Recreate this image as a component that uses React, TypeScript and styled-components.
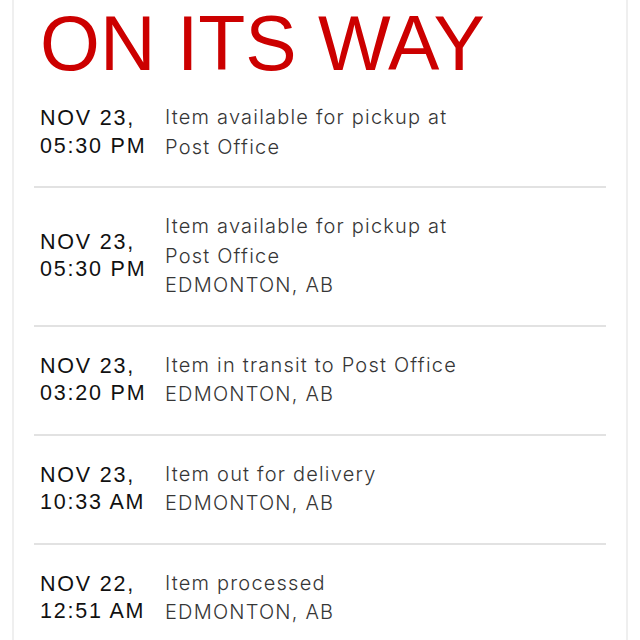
import React from 'react'
import styled, { createGlobalStyle } from "styled-components";

const GlobalStyle = createGlobalStyle`
    html, body {
        margin: 0;
        padding: 0;
        background: #ffffff;
    }
    body {
        font-family: "Liberation Sans", Arial, sans-serif;
    }
`;

const events = [
    { day: "NOV 23,", time: "05:30 PM", lines: ["Item available for pickup at", "Post Office"] },
    { day: "NOV 23,", time: "05:30 PM", lines: ["Item available for pickup at", "Post Office", "EDMONTON, AB"] },
    { day: "NOV 23,", time: "03:20 PM", lines: ["Item in transit to Post Office", "EDMONTON, AB"] },
    { day: "NOV 23,", time: "10:33 AM", lines: ["Item out for delivery", "EDMONTON, AB"] },
    { day: "NOV 22,", time: "12:51 AM", lines: ["Item processed", "EDMONTON, AB"] },
];

export default function App(){
    return (
        <>
            <GlobalStyle />
            <Card>
                <Title>ON ITS WAY</Title>
                <EventList>
                    {events.map((event, index) => (
                        <EventRow key={index}>
                            <DateCell>
                                <div>{event.day}</div>
                                <div>{event.time}</div>
                            </DateCell>
                            <Description>
                                {event.lines.map((line, i) => (
                                    <div key={i}>{line}</div>
                                ))}
                            </Description>
                        </EventRow>
                    ))}
                </EventList>
            </Card>
        </>
    );
}

export const Card = styled.div`
    margin: 0 12px;
    min-height: 640px;
    box-sizing: border-box;
    padding: 0 20px;
    border-left: 2px solid #efefef;
    border-right: 2px solid #efefef;
`;

export const Title = styled.h1`
    margin: 0;
    padding: 8px 6px 0;
    font-family: "Liberation Sans", Arial, sans-serif;
    font-weight: normal;
    font-size: 77px;
    line-height: 71px;
    letter-spacing: 0;
    color: #cc0000;
    white-space: nowrap;
`;

export const EventList = styled.div`
    display: flex;
    flex-direction: column;
`;

export const EventRow = styled.div`
    display: grid;
    grid-template-columns: 125px 1fr;
    align-items: center;
    padding: 24px 6px;
    border-bottom: 2px solid #e2e2e2;
`;

export const DateCell = styled.div`
    font-family: "Liberation Sans", Arial, sans-serif;
    font-size: 21.5px;
    line-height: 27.5px;
    letter-spacing: 1.8px;
    color: #111111;
    white-space: nowrap;
`;

export const Description = styled.div`
    font-family: Inter, "Lato", sans-serif;
    font-weight: 300;
    font-size: 20px;
    line-height: 29.5px;
    letter-spacing: 1.2px;
    color: #363636;
    white-space: nowrap;
`;
